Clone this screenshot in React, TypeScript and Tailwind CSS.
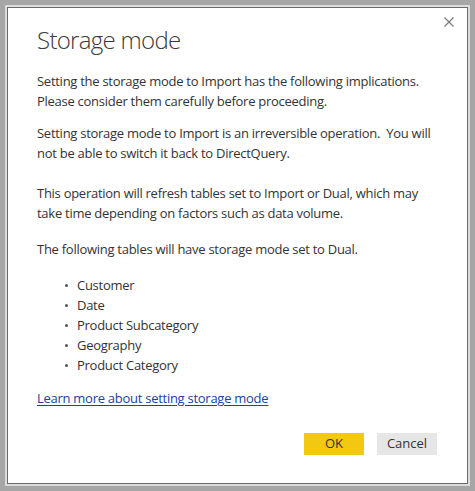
const tables = ['Customer', 'Date', 'Product Subcategory', 'Geography', 'Product Category'];

export default function App() {
  return (
    <div className="h-[491px] w-[475px] bg-[#a6a6a6] p-[5px]">
      <div className="h-full w-full bg-[#dcdcdc] p-[2px]">
        <div
          className="relative flex h-full w-full flex-col border border-[#6b6b6b] bg-white pl-[29px] pr-[20px] text-[#333333]"
          style={{ fontFamily: '"Open Sans", "Noto Sans", sans-serif' }}
        >
          <button className="absolute right-[11px] top-[7px] flex h-[14px] w-[14px] items-center justify-center text-[#777777]">
            <svg width="10" height="10" viewBox="0 0 10 10" fill="none" stroke="currentColor" strokeWidth="1.1">
              <path d="M0.5 0.5 L9.5 9.5 M9.5 0.5 L0.5 9.5" />
            </svg>
          </button>

          <h1 className="mt-[15px] text-[24px] font-light leading-[34px] tracking-[-0.7px] text-[#3a3a3a]">
            Storage mode
          </h1>

          <div className="text-[13px] leading-[20px] tracking-[-0.27px]">
            <p className="mt-[14px]">
              Setting the storage mode to Import has the following implications.
              <br />
              Please consider them carefully before proceeding.
            </p>
            <p className="mt-[12px]">
              Setting storage mode to Import is an irreversible operation.&nbsp; You will
              <br />
              not be able to switch it back to DirectQuery.
            </p>
            <p className="mt-[20px]">
              This operation will refresh tables set to Import or Dual, which may
              <br />
              take time depending on factors such as data volume.
            </p>
            <p className="mt-[16px]">The following tables will have storage mode set to Dual.</p>

            <ul className="mt-[16px] pl-[28px]">
              {tables.map((t) => (
                <li key={t} className="flex items-center">
                  <span className="mr-[9px] h-[3px] w-[3px] rounded-full bg-[#555555]" />
                  <span>{t}</span>
                </li>
              ))}
            </ul>

            <a href="#" className="mt-[13px] block w-fit text-[#23409f] underline underline-offset-2">
              Learn more about setting storage mode
            </a>
          </div>

          <div className="mt-[25px] flex justify-end gap-[13px] pr-[10px] text-[13px]">
            <button className="h-[22px] w-[60px] bg-[#f2c811] text-[#333333]">OK</button>
            <button className="h-[22px] w-[60px] bg-[#e6e6e6] text-[#333333]">Cancel</button>
          </div>
        </div>
      </div>
    </div>
  );
}
